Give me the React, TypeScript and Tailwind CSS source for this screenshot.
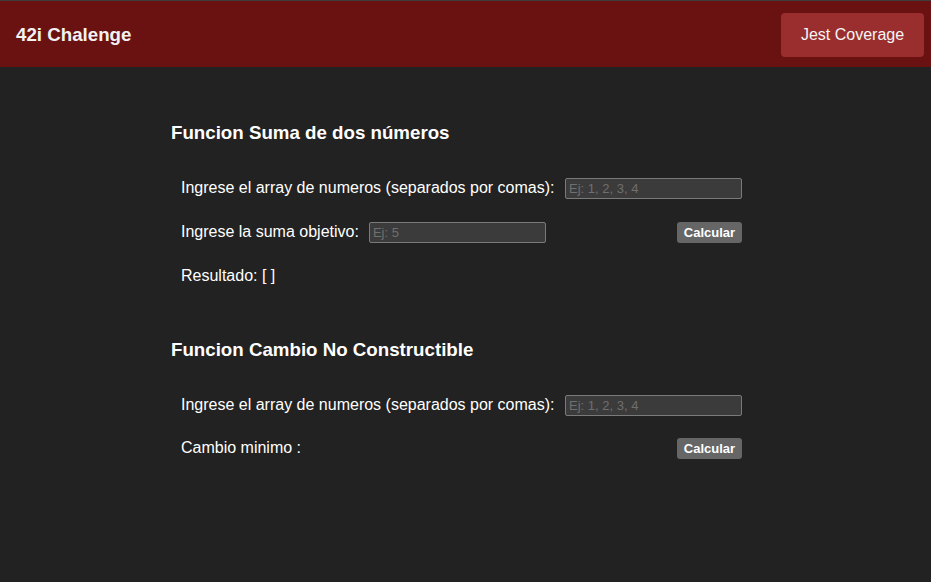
import React from 'react';

const Row: React.FC<{ children: React.ReactNode }> = ({ children }) => (
  <div className="flex items-center justify-between h-[22px] pl-[10px]">{children}</div>
);

const Field: React.FC<{ placeholder: string }> = ({ placeholder }) => (
  <input
    placeholder={placeholder}
    className="w-[177px] h-[21px] bg-[#3b3b3b] border border-[#7a7a7a] rounded-[2px] px-[3px] text-[13px] text-[#ddd] placeholder:text-[#6f6f6f] outline-none"
  />
);

const CalcButton = () => (
  <button className="h-[21px] w-[65px] bg-[#666666] text-white text-[13px] font-bold rounded-[3px] leading-none">
    Calcular
  </button>
);

export default function App() {
  return (
    <div className="min-h-[582px] bg-[#222222] text-white" style={{ fontFamily: '"Liberation Sans", Arial, sans-serif' }}>
      <header className="h-[67px] bg-[#6a1212] border-t border-[#3d3d3d] flex items-center justify-between pt-[2px] pl-[16px] pr-[7px]">
        <h1 className="text-[18.72px] font-bold text-[#f2f2f2]">42i Chalenge</h1>
        <button className="w-[143px] h-[44px] bg-[#9a2e2e] rounded-[4px] text-[16px] text-[#f5f5f5]">Jest Coverage</button>
      </header>

      <main className="w-[571px] ml-[171px] pt-[55px]">
        <section>
          <h2 className="text-[18.72px] leading-[21px] font-bold">Funcion Suma de dos números</h2>
          <div className="mt-[34px] flex flex-col gap-[22px] text-[16px]">
            <Row>
              <span>Ingrese el array de numeros (separados por comas):</span>
              <Field placeholder="Ej: 1, 2, 3, 4" />
            </Row>
            <Row>
              <div className="flex items-center gap-[10px]">
                <span>Ingrese la suma objetivo:</span>
                <Field placeholder="Ej: 5" />
              </div>
              <CalcButton />
            </Row>
            <Row>
              <span>Resultado: [ ]</span>
            </Row>
          </div>
        </section>

        <section className="mt-[52px]">
          <h2 className="text-[18.72px] leading-[21px] font-bold">Funcion Cambio No Constructible</h2>
          <div className="mt-[34px] flex flex-col gap-[21px] text-[16px]">
            <Row>
              <span>Ingrese el array de numeros (separados por comas):</span>
              <Field placeholder="Ej: 1, 2, 3, 4" />
            </Row>
            <Row>
              <span>Cambio minimo :</span>
              <CalcButton />
            </Row>
          </div>
        </section>
      </main>
    </div>
  );
}
